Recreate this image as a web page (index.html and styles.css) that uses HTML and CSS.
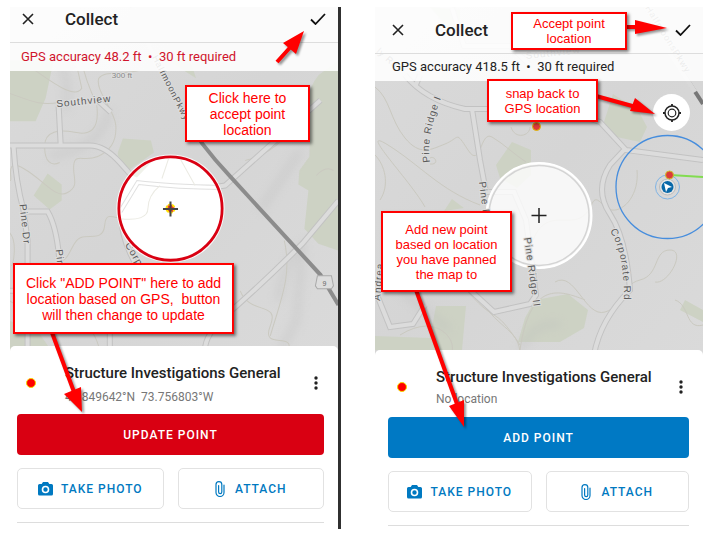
FILE: index.html
```html
<!DOCTYPE html>
<html lang="en">
<head>
<meta charset="utf-8">
<title>Collect</title>
<link rel="stylesheet" href="styles.css">
</head>
<body>
<svg class="defs" aria-hidden="true">
  <symbol id="close" viewBox="0 0 12 12"><path d="M1 1l10 10M11 1L1 11" fill="none" stroke="#222" stroke-width="1.6"/></symbol>
  <symbol id="check" viewBox="0 0 16 12"><path d="M1 6.5l4.5 4.5L15 1" fill="none" stroke="#111" stroke-width="1.8"/></symbol>
  <symbol id="camera" viewBox="0 0 15 14"><path fill="#0079c1" d="M5 0h5l1.300 2H13.500Q15 2 15 3.500V12Q15 13.500 13.500 13.500H1.500Q0 13.500 0 12V3.500Q0 2 1.500 2H3.700z"/><circle cx="7.500" cy="7.500" r="3" fill="#0079c1" stroke="#fff" stroke-width="1.600"/></symbol>
  <symbol id="clip" viewBox="0 0 10 16"><path d="M9 4v7.500a4 4 0 0 1-8 0V3.500a2.800 2.800 0 0 1 5.800 0V11a1.600 1.600 0 0 1-3.200 0V4.500" fill="none" stroke="#0079c1" stroke-width="1.200" stroke-linecap="round"/></symbol>
  <symbol id="more" viewBox="0 0 4 14"><g fill="#222"><circle cx="2" cy="2" r="1.700"/><circle cx="2" cy="7" r="1.700"/><circle cx="2" cy="12" r="1.700"/></g></symbol>
</svg>
<main class="board">
  <section class="phone phone-update">
    <div class="view">
      <svg class="map" viewBox="10 7 328 343" preserveAspectRatio="xMidYMin slice">
        <defs>
          <linearGradient id="relief" x1="0" y1="0" x2="1" y2="1"><stop offset="0" stop-color="#dadada"/><stop offset=".5" stop-color="#d5d5d5"/><stop offset="1" stop-color="#dadada"/></linearGradient>
          <filter id="soft"><feGaussianBlur stdDeviation="5"/></filter>
        </defs>
        <rect x="10" y="7" width="328" height="343" fill="url(#relief)"/>
        <g class="park">
          <path d="M10 60H54L46 98 36 121H10zM118 152L123 138 151 140 154 152 140 162 128 170 118 155zM34 195L48 173 62 184 62 200 50 209zM310 105Q306 90 318 75L338 60V250L318 243 304 228 308 190 298 184 299 170 309 156zM10 320L38 330 52 350H10zM160 55L196 78 190 60z"/>
        </g>
        <g filter="url(#soft)" class="relief"><path d="M62 60Q70 90 66 110M110 110Q100 150 50 155M278 300Q284 260 302 245L296 320 280 350M300 150L260 210"/></g>
        <g class="contour">
          <path d="M35 70C50 80 75 100 82 88L78 70M10 93C30 100 40 106 60 102M84 70C88 85 92 92 94 98M99 78C95 90 115 110 116 125S112 150 98 156 75 152 74 165 80 185 68 192 45 180 24 168 15 182 10 180M97 105C100 130 90 135 75 132S45 130 45 146 52 166 60 162M99 78C105 70 120 75 140 70M10 232C18 240 14 262 12 265M60 262C72 258 72 236 85 236S104 236 105 224 112 216 121 218M240 290C250 315 280 300 270 325S295 330 288 350M270 335C280 300 292 275 284 240M300 110Q285 150 245 160M10 300C40 320 90 300 100 350M316 175Q325 165 333 170"/>
        </g>
        <g class="road-edge">
          <path d="M10 145H90Q105 145 120 162L137 181Q200 190 225 185L320 100M14 146Q16 180 24 210L28 240V350M61 144L59 106M99 101L111 112M24 211H48Q58 228 60 265M120 205L137 181M121 207Q120 240 140 270M338 200L302 243Q260 285 225 315 204 335 205 350M10 290H28M110 330V350"/>
        </g>
        <g class="road">
          <path d="M10 145H90Q105 145 120 162L137 181Q200 190 225 185L320 100M14 146Q16 180 24 210L28 240V350M61 144L59 106M99 101L111 112M24 211H48Q58 228 60 265M120 205L137 181M121 207Q120 240 140 270M338 200L302 243Q260 285 225 315 204 335 205 350M10 290H28M110 330V350"/>
        </g>
        <path d="M132 7L160 70 202 143Q215 160 230 176L320 274 338 304" fill="none" stroke="#8c8c8c" stroke-width="4"/>
        <path d="M132 7L160 70 200 140" fill="none" stroke="#d8d8d8" stroke-width="5"/>
        <g class="place">
          <text transform="translate(57 107) rotate(-6)">Southview</text>
          <text x="112" y="78" class="minor">300 ft</text>
          <text transform="translate(152 57) rotate(63)" class="strong">HalfmoonPkwy</text>
          <text transform="translate(20 204) rotate(84)">Pine Dr</text>
          <text transform="translate(56 249) rotate(84)">Pine Dr</text>
          <text transform="translate(125 244) rotate(60)">Corporate</text>
        </g>
        <path d="M317 275H331L333 285 331 288H317L315 285z" fill="#ddd" stroke="#aaa"/>
        <text x="324" y="285" class="shield">9</text>
        <circle cx="170.500" cy="208" r="54" fill="#fff" opacity=".85"/>
        <circle cx="170.500" cy="208" r="51.500" fill="#fff" stroke="#d90012" stroke-width="2.800"/>
        <clipPath id="lens"><circle cx="170.500" cy="208" r="50"/></clipPath>
        <g clip-path="url(#lens)" opacity=".3"><path d="M125 142L152 142 155 158 137 177 122 170z" fill="#ccd3bb"/><path class="lens-line" d="M120 208L137 180Q170 184 225 185M122 212L139 184Q180 189 225 189"/><path class="lens-contour" d="M120 218Q148 221 148 208T160 185 M162 178L170 154M180 158L195 185"/></g>
        <circle cx="170.500" cy="208" r="4" fill="#e7352c" stroke="#ffe600" stroke-width="2" stroke-dasharray="3 1"/>
        <path d="M163 208.500H178M170.500 201V216" stroke="#444" stroke-width="2"/>
      </svg>
      <header class="bar">
        <button class="icon" aria-label="Close"><svg class="close"><use href="#close"/></svg></button>
        <h1>Collect</h1>
        <button class="icon" aria-label="Accept"><svg class="check"><use href="#check"/></svg></button>
      </header>
      <p class="status">GPS accuracy 48.2 ft &nbsp;•&nbsp; 30 ft required</p>
    </div>
    <div class="sheet">
      <div class="feature">
        <span class="dot"></span>
        <div class="info"><h2>Structure Investigations General</h2><p>42.849642°N &nbsp;73.756803°W</p></div>
        <button class="icon" aria-label="More"><svg class="more"><use href="#more"/></svg></button>
      </div>
      <button class="primary">UPDATE POINT</button>
      <div class="actions">
        <button><svg class="camera"><use href="#camera"/></svg>TAKE PHOTO</button>
        <button><svg class="clip"><use href="#clip"/></svg>ATTACH</button>
      </div>
      <hr>
    </div>
    <svg class="arrows" viewBox="10 7 328 522" preserveAspectRatio="xMinYMin meet">
      <path d="M277 62L295 42M51 330L74 392" class="shaft"/>
      <path d="M304 31L283 43 296 54zM82 412L64 394 81 387z" class="head"/>
    </svg>
    <p class="callout accept">Click here to<br>accept point<br>location</p>
    <p class="callout change">Click "ADD POINT" here to add<br>location based on GPS,&nbsp; button<br>will then change to update</p>
  </section>

  <section class="phone phone-add">
    <div class="view">
      <svg class="map" viewBox="375 7 328 348" preserveAspectRatio="xMidYMin slice">
        <rect x="375" y="7" width="328" height="348" fill="url(#relief)"/>
        <g class="park">
          <path d="M496 165L512 142 531 150V175L517 188 500 178zM613 94L638 110 647 127 640 142 612 136 602 128zM430 7L460 10V26L450 30zM535 300L568 294 588 310 584 328 560 342H518L525 318zM436 306H466L462 350H375V336L430 338zM444 211L452 199 464 208zM685 300L703 310V322L680 310z"/>
        </g>
        <g filter="url(#soft)" class="relief"><path d="M520 350Q535 320 560 325M400 290L450 330"/></g>
        <g class="contour">
          <path d="M375 87C390 98 390 120 405 138S430 150 445 144 455 130 468 150 480 130 492 137 515 155 526 162M480 205C440 190 420 165 388 145S410 180 425 207M375 155C385 165 390 185 380 200M430 164C440 165 435 155 430 158M511 127C515 140 530 136 530 127M533 240C545 210 565 225 580 218S590 190 603 205 640 200 637 170M555 282C575 270 585 318 605 312S620 285 640 280 653 250 670 250 668 285 655 282M520 350C530 280 560 290 585 300M462 285C500 330 490 300 520 345M675 300C690 305 685 330 703 325M400 335C440 310 460 345 450 355M480 300C500 330 520 330 520 355"/>
        </g>
        <g class="road-edge">
          <path d="M405 75Q425 100 465 109L560 109 600 122 626 150 703 160M624 150L610 165Q594 190 610 214T630 290Q600 320 594 355M472 109L480 160 486 192H514L526 220 536 295 530 304 494 312 470 290M375 290L390 327 413 324 425 305M420 75L415 87M452 8L464 46H510L530 65"/>
        </g>
        <g class="road">
          <path d="M405 75Q425 100 465 109L560 109 600 122 626 150 703 160M624 150L610 165Q594 190 610 214T630 290Q600 320 594 355M472 109L480 160 486 192H514L526 220 536 295 530 304 494 312 470 290M375 290L390 327 413 324 425 305M420 75L415 87M452 8L464 46H510L530 65"/>
        </g>
        <path d="M640 7L703 104" fill="none" stroke="#777" stroke-width="4"/>
        <path d="M630 -8L695 92" fill="none" stroke="#d8d8d8" stroke-width="5"/>
        <circle cx="539" cy="215.500" r="53" fill="#fff" opacity=".8"/>
        <circle cx="539" cy="215.500" r="52.500" fill="none" stroke="#fff" stroke-width="2"/>
        <circle cx="539" cy="215.500" r="50" fill="none" stroke="#d4d4d4" stroke-width="1.500"/>
        <g class="place">
          <text transform="translate(526 59) rotate(-6)">Southview</text>
          <text transform="translate(376 52) rotate(42)" class="strong">ly Rd</text>
          <text transform="translate(645 8) rotate(58)" class="strong">HalfmoonsPkwy</text>
          <text><textPath href="#ridge">Pine Ridge I</textPath></text>
          <text transform="translate(479 182) rotate(83)">Pine Dr</text>
          <text transform="translate(524 238) rotate(82)">Pine Ridge II</text>
          <text transform="translate(380 301) rotate(-85)">Andrea</text>
          <text><textPath href="#corporate">Corporate Rd</textPath></text>
        </g>
        <defs><path id="ridge" d="M430 162Q426 138 441 98"/><path id="corporate" d="M610 231Q624 252 624 300"/></defs>
        <circle cx="667.500" cy="187" r="51.500" fill="none" stroke="#468ddd" stroke-width="1.300"/>
        <path d="M670 175L703 177" stroke="#82dc50" stroke-width="2"/>
        <circle cx="667.500" cy="187" r="12" fill="none" stroke="#80b4e5"/>
        <circle cx="667.500" cy="187" r="8" fill="#e5e5e5" stroke="#bbb"/>
        <circle cx="667.500" cy="187" r="6" fill="#0868a8"/>
        <path d="M664 183L672 187 668 188 666 192z" fill="#fff"/>
        <circle cx="669.500" cy="175" r="4" fill="#dc3a39" stroke="#cfbd2c"/>
        <circle cx="536.500" cy="126.500" r="4" fill="#dc3a39" stroke="#e0c000"/>
        <path d="M531.500 215.500H546.500M539 208V223" stroke="#222" stroke-width="1.500"/>
      </svg>
      <header class="bar">
        <button class="icon" aria-label="Close"><svg class="close"><use href="#close"/></svg></button>
        <h1>Collect</h1>
        <button class="icon" aria-label="Accept"><svg class="check"><use href="#check"/></svg></button>
      </header>
      <p class="status">GPS accuracy 418.5 ft &nbsp;•&nbsp; 30 ft required</p>
      <button class="locate" aria-label="Snap back to GPS location"><svg viewBox="0 0 20 20"><g fill="none" stroke="#222"><circle cx="10" cy="10" r="7" stroke-width="1.500"/><circle cx="10" cy="10" r="3.800" stroke-width="1.200"/><path stroke-width="1.800" d="M10 1v2M10 17v2M1 10h2M17 10h2"/></g></svg></button>
    </div>
    <div class="sheet">
      <div class="feature">
        <span class="dot"></span>
        <div class="info"><h2>Structure Investigations General</h2><p>No location</p></div>
        <button class="icon" aria-label="More"><svg class="more"><use href="#more"/></svg></button>
      </div>
      <button class="primary">ADD POINT</button>
      <div class="actions">
        <button><svg class="camera"><use href="#camera"/></svg>TAKE PHOTO</button>
        <button><svg class="clip"><use href="#clip"/></svg>ATTACH</button>
      </div>
      <hr>
    </div>
    <svg class="arrows" viewBox="375 7 328 522" preserveAspectRatio="xMinYMin meet">
      <path d="M626 27H640M596 96L636 107M416 290L457 404" class="shaft"/>
      <path d="M667 28L635 20V34zM655 114L635 98 630 111zM464 427L449 406 464 400z" class="head"/>
    </svg>
    <p class="callout tick">Accept point<br>location</p>
    <p class="callout snap">snap back to<br>GPS location</p>
    <p class="callout pan">Add new point<br>based on location<br>you have panned<br>the map to</p>
  </section>
</main>
</body>
</html>
```
FILE: styles.css
```css
* { box-sizing: border-box; }
body { margin: 0; background: #fff; font-family: Roboto, "Liberation Sans", sans-serif; color: #222; }
h1, h2, p { margin: 0; }
button { font: inherit; border: 0; background: none; padding: 0; }
.defs { position: absolute; width: 0; height: 0; }
.board { display: grid; grid-template-columns: 331fr 328fr; gap: 34px; min-height: 100vh; padding: 7px 8px 6px 10px; }
.phone { position: relative; display: flex; flex-direction: column; min-width: 0; }
.phone-update { border-right: 3px solid #303030; }
.view { position: relative; flex: 1; }
.map { position: absolute; top: 0; left: 0; width: 100%; height: calc(100% + 5px); }

.bar { position: relative; display: flex; align-items: center; height: 36px; padding: 0 12px; background: rgba(255, 255, 255, .9); border-bottom: 1px solid #ddd; }
.bar h1 { flex: 1; font-size: 17px; line-height: 20px; font-weight: 500; }
.icon { display: grid; place-items: center; flex: none; }
.close { width: 12px; height: 12px; }
.check { width: 16px; height: 12px; }
.more { width: 4px; height: 14px; }
.phone-update .bar { padding-bottom: 12px; }
.phone-update .bar h1 { margin-left: 31px; }
.phone-add .bar { height: 47px; padding-left: 17px; }
.phone-add .bar h1 { margin-left: 31px; }
.status { position: relative; height: 28px; padding-left: 11px; font-size: 13px; line-height: 28px; background: rgba(255, 255, 255, .88); white-space: nowrap; }
.phone-update .status { color: #d0142c; }
.phone-add .status { height: 27px; padding-left: 17px; line-height: 26px; }
.locate { position: absolute; top: 87px; right: 13px; width: 37px; height: 37px; border-radius: 50%; background: #fff; display: grid; place-items: center; }
.locate svg { width: 20px; height: 20px; }

.sheet { position: relative; padding: 0 14px 6px 7px; background: #fff; border-radius: 5px 5px 0 0; }
.phone-add .sheet { padding: 0 14px 3px 13px; }
.feature { display: flex; align-items: flex-start; height: 68px; }
.phone-add .feature { height: 67px; }
.dot { flex: none; width: 10px; height: 10px; margin: 32px 29px 0 9px; border-radius: 50%; background: #f00; border: 1px solid #f5d800; }
.info { flex: 1; padding-top: 17px; white-space: nowrap; }
.info h2 { font-size: 15px; line-height: 20px; font-weight: 500; }
.info p { margin-top: 4px; font-size: 12px; line-height: 20px; color: #777; }
.feature .icon { margin: 30px 6px 0 0; }
.phone-add .info p { margin-top: 2px; }
.primary { display: block; width: 100%; height: 41px; border-radius: 4px; color: #fff; font-size: 12px; font-weight: 500; letter-spacing: 1px; background: #d90012; }
.phone-add .primary { background: #0079c4; }
.actions { display: grid; grid-template-columns: 1fr 1fr; gap: 14px; margin: 13px 0; }
.actions button { display: flex; align-items: center; justify-content: center; gap: 8px; height: 41px; border: 1px solid #e2e2e2; border-radius: 5px; color: #0079c1; font-size: 12px; font-weight: 500; letter-spacing: 1px; }
.camera { width: 15px; height: 14px; }
.clip { width: 10px; height: 16px; margin-right: 2px; }
hr { height: 1px; margin: 0; border: 0; background: #ddd; }

.park { fill: #cdd2c4; }
.contour { fill: none; stroke: #cac9c0; stroke-width: 1; }
.relief { fill: none; stroke: #bbb; stroke-width: 6; opacity: .4; }
.road-edge { fill: none; stroke: #c2c2c2; stroke-width: 6; }
.road { fill: none; stroke: #dcdcdc; stroke-width: 4; }
.lens-line { fill: none; stroke: #999; }
.lens-contour { fill: none; stroke: #bbb9a0; }
.place { font: 10px "Liberation Sans", sans-serif; fill: #5a5a5a; stroke: #ddd; stroke-width: 2px; paint-order: stroke; letter-spacing: 1px; }
.minor { font-size: 8px; fill: #888; letter-spacing: 0; }
.strong { font-size: 9px; }
.shield { font: 7px "Liberation Sans", sans-serif; fill: #666; text-anchor: middle; }

.arrows { position: absolute; top: 0; left: 0; width: 100%; height: 100%; pointer-events: none; filter: drop-shadow(2px 2px 1px rgba(0, 0, 0, .4)); }
.shaft { fill: none; stroke: #f00; stroke-width: 4; }
.head { fill: #f00; }
.callout { position: absolute; display: grid; place-items: center; text-align: center; background: #fff; border: 2px solid #f00; box-shadow: 2px 2px 3px rgba(0, 0, 0, .5); color: #f00; font: 14px/16px "Liberation Sans", sans-serif; white-space: nowrap; }
.phone-add .callout { font-size: 13px; line-height: 15px; }
.accept { top: 78px; left: 175px; width: 125px; height: 57px; }
.change { top: 256px; left: 3px; width: 221px; height: 71px; }
.tick { top: 5px; left: 136px; width: 116px; height: 38px; }
.snap { top: 72px; left: 112px; width: 111px; height: 43px; }
.pan { top: 204px; left: 6px; width: 131px; height: 81px; }
```
